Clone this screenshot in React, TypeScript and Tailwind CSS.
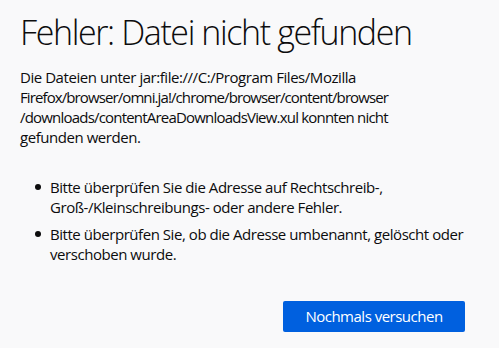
export default function App() {
  const font = { fontFamily: '"Open Sans", "Noto Sans", sans-serif' };
  return (
    <div
      className="min-h-screen w-full bg-[#f9f9fa] text-[#0c0c0d] pl-5 pr-[34px] pt-3"
      style={font}
    >
      <h1 className="text-[34px] leading-[40px] font-light whitespace-nowrap tracking-[-1.4px]">
        Fehler: Datei nicht gefunden
      </h1>
      <p className="mt-[15px] text-[15px] leading-[20px] tracking-[-0.45px]">
        <span className="whitespace-nowrap">Die Dateien unter jar:file:///C:/Program Files/Mozilla</span>
        <br />
        <span className="whitespace-nowrap tracking-[-0.9px]">Firefox/browser/omni.ja!/chrome/browser/content/browser</span>
        <br />
        <span className="whitespace-nowrap tracking-[-0.8px]">/downloads/contentAreaDownloadsView.xul konnten nicht</span>
        <br />
        <span className="whitespace-nowrap">gefunden werden.</span>
      </p>
      <ul className="mt-[30px] pl-[15px] text-[15px] leading-[20px] tracking-[-0.45px] flex flex-col gap-[7px]">
        <li className="flex">
          <span className="mt-[7px] mr-[9px] w-1.5 h-1.5 rounded-full bg-[#0c0c0d] shrink-0" />
          <span className="whitespace-nowrap">
            Bitte überprüfen Sie die Adresse auf Rechtschreib-,
            <br />
            Groß-/Kleinschreibungs- oder andere Fehler.
          </span>
        </li>
        <li className="flex">
          <span className="mt-[7px] mr-[9px] w-1.5 h-1.5 rounded-full bg-[#0c0c0d] shrink-0" />
          <span className="whitespace-nowrap">
            Bitte überprüfen Sie, ob die Adresse umbenannt, gelöscht oder
            <br />
            verschoben wurde.
          </span>
        </li>
      </ul>
      <div className="mt-[37px] flex justify-end">
        <button className="w-[182px] h-[31px] rounded-[2px] bg-[#0060df] text-white text-[15px] leading-none tracking-[-0.5px]">
          Nochmals versuchen
        </button>
      </div>
    </div>
  );
}
